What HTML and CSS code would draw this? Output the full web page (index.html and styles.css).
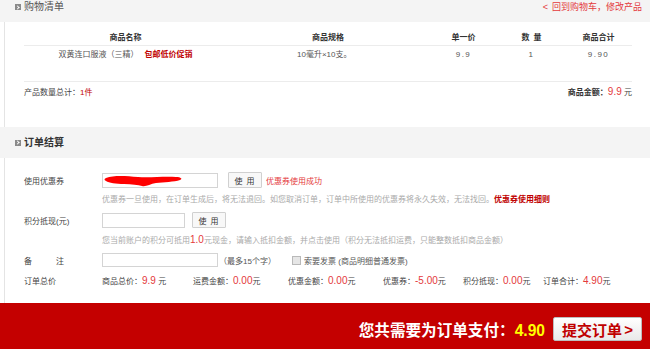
FILE: index.html
```html
<!DOCTYPE html>
<html lang="zh-CN">
<head>
  <meta charset="UTF-8" />
  <title>订单确认</title>
  <link rel="stylesheet" href="styles.css">
</head>
<body>
  <div class="head head-cart">
    <span class="head-title"><i class="arr"></i>购物清单</span>
    <a class="back-link" href="#"><span class="lt">&lt;</span>回到购物车，修改产品</a>
  </div>
  <div class="box box-cart">
    <table class="goods">
      <thead>
        <tr>
          <th class="c-name">商品名称</th>
          <th class="c-spec">商品规格</th>
          <th class="c-price">单一价</th>
          <th class="c-num">数&ensp;量</th>
          <th class="c-sum">商品合计</th>
        </tr>
      </thead>
      <tbody>
        <tr>
          <td>双黄连口服液（三精）<b class="promo">包邮低价促销</b></td>
          <td class="spec">10毫升×10支。</td>
          <td class="num">9.9</td>
          <td class="num">1</td>
          <td class="num">9.90</td>
        </tr>
      </tbody>
    </table>
    <div class="cart-total">
      <span>产品数量总计：<em class="red-s">1件</em></span>
      <span class="amount"><b>商品金额：</b><em class="price">9.9</em> 元</span>
    </div>
  </div>

  <div class="head head-order">
    <span class="head-title"><i class="arr"></i>订单结算</span>
  </div>
  <div class="box box-order">
    <div class="row">
      <span class="label">使用优惠券</span>
      <span class="field field-wide">
        <input type="text" class="ipt">
        <svg class="scribble" width="80" height="14" viewBox="0 0 80 14">
          <path d="M2 4 C10 1 22 2 34 3 C46 4 60 2 72 3 C77 3 79 5 76 6 C70 8 60 8 52 9 C46 10 42 13 38 12 C34 11 28 10 20 10 C12 10 5 9 2 7 C0 6 0 5 2 4 Z" fill="#ff0000"/>
        </svg>
      </span>
      <button class="btn btn-coupon">使 用</button>
      <span class="ok">优惠券使用成功</span>
    </div>
    <div class="hint">优惠券一旦使用，在订单生成后，将无法退回。如您取消订单，订单中所使用的优惠券将永久失效，无法找回。<a class="rule" href="#">优惠券使用细则</a></div>
    <div class="row">
      <span class="label">积分抵现(元)</span>
      <span class="field field-short"><input type="text" class="ipt"></span>
      <button class="btn btn-point">使 用</button>
    </div>
    <div class="hint">您当前账户的积分可抵用<em class="price">1.0</em>元现金，请输入抵扣金额，并点击使用（积分无法抵扣运费，只能整数抵扣商品金额）</div>
    <div class="row">
      <span class="label">备　　　注</span>
      <span class="field field-wide"><input type="text" class="ipt ipt-note"></span>
      <span class="limit">（最多15个字）</span>
      <label class="invoice"><i class="chk"></i>索要发票 (商品明细普通发票)</label>
    </div>
    <div class="row">
      <span class="label">订单总价</span>
      <span class="sum s1">商品总价：<em class="price">9.9</em> 元</span>
      <span class="sum s2">运费金额：<em class="price">0.00</em>元</span>
      <span class="sum s3">优惠金额：<em class="price">0.00</em>元</span>
      <span class="sum s4">优惠券：<em class="price">-5.00</em>元</span>
      <span class="sum s5">积分抵现：<em class="price">0.00</em>元</span>
      <span class="sum s6">订单合计：<em class="price">4.90</em>元</span>
    </div>
  </div>

  <div class="pay-bar">
    <span class="pay-text">您共需要为订单支付：<em>4.90</em></span>
    <button class="submit-btn">提交订单<span class="gt">&gt;</span></button>
  </div>
</body>
</html>
```

FILE: styles.css
```css
body {
  margin: 0;
  font-family: "Liberation Sans", "Noto Sans CJK SC", sans-serif;
  font-size: 8px;
  color: #444;
  background-color: #ffffff;
}

em {
  font-style: normal;
}

a {
  text-decoration: none;
}

.head {
  display: flex;
  justify-content: space-between;
  background-color: #f4f4f4;
  padding: 0 8px 0 15px;
}

.head-cart {
  height: 22px;
  align-items: flex-start;
  padding-top: 1px;
  box-sizing: border-box;
}

.head-order {
  height: 31px;
  align-items: center;
}

.head-title {
  display: flex;
  align-items: center;
  font-size: 10px;
  line-height: 12px;
  color: #555;
}

.head-order .head-title {
  color: #333;
  font-weight: bold;
}

.arr {
  position: relative;
  width: 6px;
  height: 6px;
  margin-right: 3px;
  background-color: #8a8a8a;
}

.arr::after {
  content: "";
  position: absolute;
  left: 1px;
  top: 1.5px;
  width: 2px;
  height: 2px;
  border-top: 1px solid #fff;
  border-right: 1px solid #fff;
  transform: rotate(45deg);
}

.back-link {
  font-size: 9px;
  line-height: 12px;
  color: #e4393c;
}

.back-link .lt {
  margin-right: 4px;
}

.box {
  margin-left: 4px;
  border-left: 1px solid #e4e4e4;
  padding-left: 19px;
  padding-right: 18px;
}

.box-cart {
  height: 105px;
  padding-top: 6px;
  box-sizing: border-box;
}

.goods {
  width: 608px;
  border-collapse: collapse;
  table-layout: fixed;
}

.goods th {
  height: 17px;
  font-size: 8px;
  font-weight: bold;
  color: #333;
  text-align: center;
  border-bottom: 1px solid #ececec;
  padding: 0;
}

.c-name { width: 203px; }
.c-spec { width: 202px; }
.c-price { width: 69px; }
.c-num { width: 67px; }
.c-sum { width: 67px; }

.goods td {
  text-align: center;
  vertical-align: top;
  line-height: 12px;
  padding: 3px 0 20px;
  color: #555;
  border-bottom: 1px solid #ececec;
}

.goods td.spec {
  text-align: left;
  padding-left: 70px;
}

.goods td.num {
  letter-spacing: 1.5px;
}

.promo {
  color: #c00000;
  margin-left: 6px;
}

.cart-total {
  display: flex;
  justify-content: space-between;
  align-items: center;
  line-height: 12px;
  padding-top: 4px;
  color: #444;
}

.red-s {
  color: #c00000;
}

.amount b {
  color: #333;
}

.price {
  color: #e4393c;
  font-size: 10px;
}

.box-order {
  height: 145px;
  padding-top: 12px;
  box-sizing: border-box;
}

.row {
  display: flex;
  align-items: center;
  height: 20px;
}

.label {
  width: 78px;
  flex-shrink: 0;
  color: #444;
}

.field {
  position: relative;
  display: block;
}

.field-wide {
  width: 116px;
}

.field-short {
  width: 83px;
}

.ipt {
  display: block;
  width: 100%;
  height: 15px;
  margin: 0;
  padding: 0 3px;
  border: 1px solid #d4d4d4;
  box-sizing: border-box;
  background-color: #fff;
}

.ipt-note {
  height: 14px;
}

.scribble {
  position: absolute;
  left: 2px;
  top: 1px;
}

.btn {
  height: 16px;
  padding: 0;
  border: 1px solid #d0d0d0;
  border-radius: 1px;
  background-color: #f8f8f8;
  font-family: "Liberation Sans", "Noto Sans CJK SC", sans-serif;
  font-size: 8px;
  color: #333;
  letter-spacing: 1px;
}

.btn-coupon {
  width: 34px;
  margin-left: 10px;
}

.btn-point {
  width: 34px;
  margin-left: 7px;
}

.ok {
  margin-left: 4px;
  color: #e4393c;
}

.hint {
  height: 20px;
  line-height: 20px;
  padding-left: 78px;
  color: #aaa;
  white-space: nowrap;
}

.rule {
  color: #c00000;
  font-weight: bold;
}

.limit {
  margin-left: 1px;
  width: 73px;
  color: #555;
}

.invoice {
  display: flex;
  align-items: center;
  color: #555;
}

.chk {
  width: 7px;
  height: 7px;
  margin-right: 3px;
  border: 1px solid #b9b9b9;
  background-color: #e6e6e6;
}

.sum {
  flex-shrink: 0;
  color: #444;
}

.s1 { width: 91px; }
.s2 { width: 95px; }
.s3 { width: 95px; }
.s4 { width: 80px; }
.s5 { width: 80px; }

.pay-bar {
  display: flex;
  justify-content: flex-end;
  align-items: center;
  height: 46px;
  padding: 6px 8px 0 0;
  box-sizing: border-box;
  background-color: #c40000;
}

.pay-text {
  font-family: "Noto Sans CJK SC", sans-serif;
  font-size: 15.6px;
  font-weight: bold;
  color: #fff;
  margin-right: 8px;
}

.pay-text em {
  font-family: "Liberation Sans", sans-serif;
  color: #ffff00;
}

.submit-btn {
  display: flex;
  align-items: center;
  justify-content: center;
  width: 89px;
  height: 24px;
  padding: 0;
  border: 1px solid #bdbdbd;
  border-radius: 2px;
  background: linear-gradient(#ffffff, #e9e9e9);
  font-family: "Noto Sans CJK SC", sans-serif;
  font-size: 15px;
  font-weight: bold;
  color: #c00000;
  cursor: pointer;
}

.submit-btn .gt {
  margin-left: 2px;
  font-family: "Liberation Sans", sans-serif;
  font-size: 15px;
}
```
